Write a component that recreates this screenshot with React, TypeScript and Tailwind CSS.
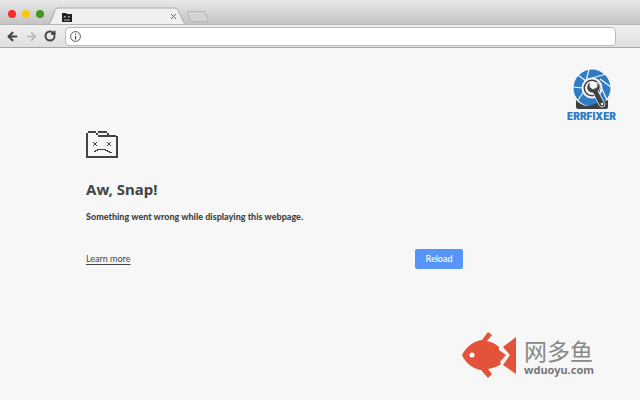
import { ArrowLeft, ArrowRight, RotateCw } from "lucide-react";

function TabIcon() {
  return (
    <svg width="10" height="10" viewBox="0 0 10 10" aria-hidden="true">
      <path d="M0 1h4l1 1h5v8H0z" fill="#222" />
      <path
        d="M2 4l1.500 1.500M3.500 4L2 5.500M6 4l1.500 1.500M7.500 4L6 5.500M2 8h6"
        stroke="#ddd"
        strokeWidth="0.8"
      />
    </svg>
  );
}

function SadFolder() {
  return (
    <svg
      width="32"
      height="28"
      viewBox="0 0 32 28"
      fill="#444"
      shapeRendering="crispEdges"
      aria-hidden="true"
    >
      <path d="M2 0h8v2H2zM0 2h2v24H0zM10 2h2v2h-2zM12 0h9v2h-9zM21 2h2v2h-2zM12 4h18v2H12zM30 5h2v21h-2zM0 25h32v2H0z" />
      <path d="M7 11h1v1H7zM10 11h1v1h-1zM8 12h2v2H8zM7 14h1v1H7zM10 14h1v1h-1z" />
      <path d="M21 11h1v1h-1zM24 11h1v1h-1zM22 12h2v2h-2zM21 14h1v1h-1zM24 14h1v1h-1z" />
      <path d="M11 18h9v1h-9zM9 19h3v1H9zM19 19h3v1h-3zM8 20h2v1H8zM21 20h3v1h-3zM23 21h3v1h-3z" />
    </svg>
  );
}

function ErrfixerLogo() {
  return (
    <svg width="40" height="41" viewBox="0 0 40 41" aria-hidden="true">
      <circle cx="20" cy="19" r="18.500" fill="#2f7cc4" />
      <g stroke="#f6f6f6" strokeWidth="1.200">
        <path d="M17 0l-3 12M34 5L20 9M39 18L28 10M35 31l-5-11M6 6l8 6M1 18l10 1M6 31l7-10" />
      </g>
      <path d="M4 31c4 4 8 6 13 6l8-3 8-2 3-1v7q0 2-2 2H6q-2 0-2-2z" fill="#414042" />
      <circle cx="20" cy="19" r="10.500" fill="#f6f6f6" />
      <circle cx="20" cy="19" r="8.500" fill="#414042" />
      <circle cx="20" cy="19" r="7" fill="#f6f6f6" />
      <path
        d="M18 13v5l3 2 4-2v-5c4 3 4 7 1 9l7 13q0 3-3 3-2 0-3-2l-6-12c-7 0-8-8-3-11z"
        fill="#414042"
        stroke="#f6f6f6"
        strokeWidth="0.8"
      />
      <circle cx="30" cy="35" r="1.200" fill="#f6f6f6" />
    </svg>
  );
}

function Fish() {
  return (
    <svg width="54" height="46" viewBox="0 0 54 46" fill="#e2533a" aria-hidden="true">
      <path d="M0 23C5 14 12 9 20 8l6-8 4 3-5 6c5 1 9 3 12 6v3l7 5-6 7 1 2c-4 3-8 4-13 5l4 5-4 4-7-8C12 37 4 32 0 23z" />
      <path d="M54 5v37L41 33l7-10-7-8z" />
      <circle cx="10" cy="23" r="2.500" fill="#fff" />
    </svg>
  );
}

function TitleBar() {
  return (
    <div className="flex h-6 items-end bg-linear-to-b from-[#e8e8e8] to-[#c4c4c4]">
      <div className="flex h-6 w-12 items-center gap-1.5 pt-1 pl-2">
        <span className="size-2 rounded-full bg-[#f52d2b]" />
        <span className="size-2 rounded-full bg-[#fbc60a]" />
        <span className="size-2 rounded-full bg-[#45981b]" />
      </div>
      <div className="grid h-[17px] w-[139px]">
        <svg
          viewBox="0 0 139 17"
          className="col-start-1 row-start-1 h-[17px] w-[139px]"
          aria-hidden="true"
        >
          <path
            d="M0 17q2 0 3-3L7 3q1-2 3-2h117q2 0 3 2l5 11q1 3 4 3"
            fill="#f0f0f0"
            stroke="#aaa"
          />
        </svg>
        <div className="col-start-1 row-start-1 flex items-center justify-between pt-0.5 pr-2 pl-3.5">
          <TabIcon />
          <button type="button" aria-label="Close tab" className="flex size-3 items-center justify-center">
            <svg width="5" height="5" viewBox="0 0 5 5" aria-hidden="true">
              <path d="M0 0l5 5M5 0L0 5" stroke="#666" />
            </svg>
          </button>
        </div>
      </div>
      <button type="button" aria-label="New tab" className="mb-0.5">
        <svg width="22" height="11" viewBox="0 0 22 11" aria-hidden="true">
          <path
            d="M2 .5h14q2 0 2 1l3 7q0 2-1 2H6q-2 0-3-2L.5 2Q0 .5 2 .5z"
            fill="#d4d4d4"
            stroke="#b5b5b5"
          />
        </svg>
      </button>
    </div>
  );
}

function Toolbar() {
  return (
    <div className="flex h-6 items-center border-y border-t-[#b5b5b5] border-b-[#a8a8a8] bg-linear-to-b from-[#f0f0f0] to-[#e0e0e0] pr-6 pl-1.5">
      <div className="flex w-[59px] items-center gap-1.5">
        <button type="button" aria-label="Back">
          <ArrowLeft size={13} strokeWidth={4} className="text-[#444]" />
        </button>
        <button type="button" aria-label="Forward">
          <ArrowRight size={13} strokeWidth={3} className="text-[#b5b5b5]" />
        </button>
        <button type="button" aria-label="Reload page">
          <RotateCw size={12} strokeWidth={4} className="text-[#444]" />
        </button>
      </div>
      <label className="flex h-[19px] flex-1 items-center rounded-sm border border-[#bbb] bg-white pl-1">
        <svg width="11" height="11" viewBox="0 0 11 11" aria-hidden="true">
          <circle cx="5.500" cy="5.500" r="4.900" fill="none" stroke="#555" />
          <path d="M5.500 5v3.500M5.500 2.500v1.200" stroke="#444" strokeWidth="1.200" />
        </svg>
        <input type="text" aria-label="Address" className="h-4 min-w-0 flex-1 px-1 text-xs outline-none" />
      </label>
    </div>
  );
}

export default function App() {
  return (
    <div className="flex min-h-screen flex-col bg-[#f7f7f7] font-['Lato','Noto_Sans_CJK_SC',sans-serif] text-[#444]">
      <header>
        <TitleBar />
        <Toolbar />
      </header>

      <main className="relative flex-1 px-[86px] pt-[83px]">
        <div className="max-w-[377px]">
          <SadFolder />
          <h1 className="mt-[18px] font-['Noto_Sans',sans-serif] text-[15px] leading-6 font-bold">
            Aw, Snap!
          </h1>
          <p className="mt-2 text-[9px] leading-4 font-black">
            Something went wrong while displaying this webpage.
          </p>
          <div className="mt-6 flex items-center justify-between">
            <a href="#" className="text-[9px] leading-4 underline underline-offset-2">
              Learn more
            </a>
            <button
              type="button"
              className="h-5 w-12 rounded-xs bg-[#5694f6] text-[9px] leading-4 font-medium text-white"
            >
              Reload
            </button>
          </div>
        </div>

        <div className="absolute top-[21px] right-6 flex flex-col items-center">
          <ErrfixerLogo />
          <span className="font-['Inter',sans-serif] text-[10px] leading-3 font-black text-[#2f7cc4]">
            ERRFIXER
          </span>
        </div>

        <div className="absolute right-[46px] bottom-[22px] flex items-end gap-2">
          <Fish />
          <div>
            <div className="font-['Noto_Sans_CJK_SC',sans-serif] text-[23px] leading-6 text-[#888]">
              网多鱼
            </div>
            <div className="font-['Noto_Sans',sans-serif] text-[11px] leading-4 font-bold text-[#777]">
              wduoyu.com
            </div>
          </div>
        </div>
      </main>
    </div>
  );
}
